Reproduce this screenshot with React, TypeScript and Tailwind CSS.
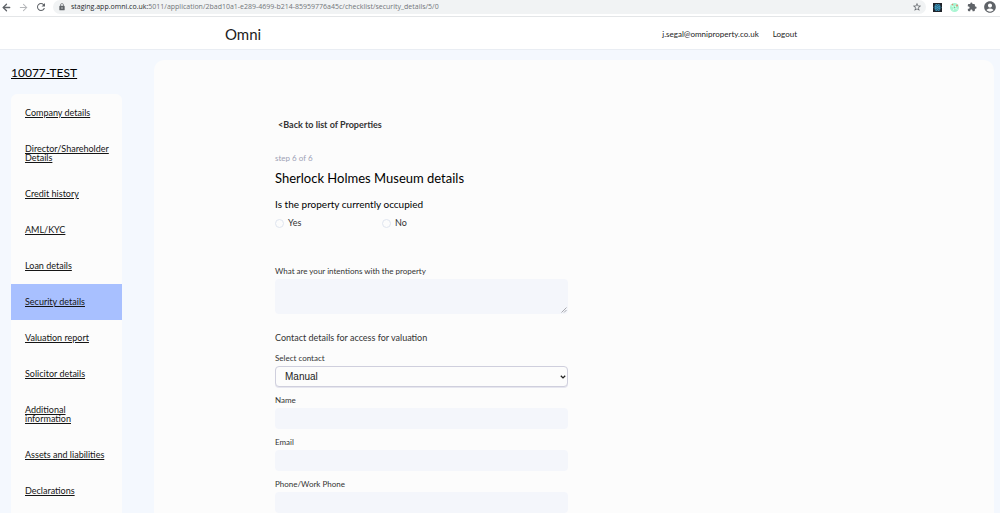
import { ArrowLeft, ArrowRight } from 'lucide-react';
import { MdExtension, MdLock, MdRefresh, MdStarBorder, MdAccountCircle } from 'react-icons/md';

const sections = [
  'Company details',
  'Director/Shareholder Details',
  'Credit history',
  'AML/KYC',
  'Loan details',
  'Security details',
  'Valuation report',
  'Solicitor details',
  'Additional information',
  'Assets and liabilities',
  'Declarations',
];

const contactFields = [
  { id: 'name', label: 'Name', type: 'text' },
  { id: 'email', label: 'Email', type: 'email' },
  { id: 'phone', label: 'Phone/Work Phone', type: 'tel' },
];

function ReactBadge() {
  return (
    <svg viewBox="0 0 18 18" className="size-[9px]" aria-hidden="true">
      <rect width="18" height="18" fill="#20232a" />
      <g fill="none" stroke="#3b9cc4" strokeWidth="1.6">
        <ellipse cx="9" cy="9" rx="7" ry="3" />
        <ellipse cx="9" cy="9" rx="7" ry="3" transform="rotate(60 9 9)" />
        <ellipse cx="9" cy="9" rx="7" ry="3" transform="rotate(120 9 9)" />
      </g>
      <circle cx="9" cy="9" r="2" fill="#3b9cc4" />
    </svg>
  );
}

function NetworkBadge() {
  return (
    <svg viewBox="0 0 18 18" className="size-[9px]" aria-hidden="true">
      <circle cx="9" cy="9" r="9" fill="#a9f5d2" />
      <path d="M3 6l6 3 5-5M9 9l-3 6M9 9l6 4" stroke="#effff7" strokeWidth="1.4" fill="none" />
      <circle cx="5" cy="3" r="1.6" fill="#e8836a" />
      <circle cx="14" cy="5" r="1.8" fill="#e8836a" />
      <circle cx="9" cy="9" r="1.4" fill="#62cf8f" />
    </svg>
  );
}

function BrowserBar() {
  return (
    <div className="flex h-[17px] shrink-0 items-center border-b border-[#e4e6e8] bg-white pb-[2px] text-[#5f6368]">
      <div className="flex w-[53px] shrink-0 items-center gap-[6px] pl-px">
        <button type="button" aria-label="Back"><ArrowLeft className="size-[11px]" strokeWidth={2.8} /></button>
        <button type="button" aria-label="Forward" className="text-[#b5b7ba]"><ArrowRight className="size-[11px]" strokeWidth={2.2} /></button>
        <button type="button" aria-label="Reload"><MdRefresh className="size-3" /></button>
      </div>
      <div className="flex h-[14px] flex-1 items-center rounded-full bg-[#f1f3f4] pr-1 pl-[5px]">
        <MdLock className="size-2 shrink-0" />
        <p className="ml-[5px] flex-1 font-['Open_Sans',sans-serif] text-[7px] leading-[14px] whitespace-nowrap text-[#72767a]">
          <span className="text-[#25282b]">staging.app.omni.co.uk:</span>5011/application/2bad10a1-e289-4699-b214-85959776a45c/checklist/security_details/5/0
        </p>
        <button type="button" aria-label="Bookmark"><MdStarBorder className="size-[10px]" /></button>
      </div>
      <div className="flex shrink-0 items-center gap-2 pr-[3px] pl-[7px]">
        <ReactBadge />
        <NetworkBadge />
        <MdExtension className="size-[10px]" />
        <MdAccountCircle className="-ml-[2px] size-[14px]" />
      </div>
    </div>
  );
}

function SiteHeader() {
  return (
    <header className="flex h-[33px] shrink-0 items-center justify-between border-b border-[#e9edf3] bg-white pt-[2px] pr-[203px] pl-[225px] text-[#1c1c1c]">
      <a href="#home" className="text-[15px] leading-5">Omni</a>
      <nav className="flex gap-[14px] text-[8px] leading-3">
        <a href="#account">j.segal@omniproperty.co.uk</a>
        <a href="#logout">Logout</a>
      </nav>
    </header>
  );
}

function Sidebar() {
  return (
    <aside className="w-[111px] shrink-0 pt-[14px]">
      <a href="#application" className="block text-[12px] leading-[18px] whitespace-nowrap text-black underline">10077-TEST</a>
      <nav className="mt-3 rounded-md bg-[#fcfcfc] pt-px pb-4">
        {sections.map((section) => (
          <a
            key={section}
            href="#section"
            aria-current={section === 'Security details' ? 'page' : undefined}
            className="block pt-[13px] pr-3 pb-[14px] pl-[14px] text-[9px] leading-[9px] text-[#151515] underline aria-[current=page]:bg-[#a8c0ff]"
          >
            {section}
          </a>
        ))}
      </nav>
    </aside>
  );
}

function Choice({ label }: { label: string }) {
  return (
    <label className="flex items-center gap-1 text-[9px] leading-3">
      <input type="radio" name="occupied" className="size-[9px] appearance-none rounded-full border border-[#dfe5ef] bg-[#fcfcfc] checked:bg-[#a8c0ff]" />
      {label}
    </label>
  );
}

function PropertyForm() {
  return (
    <form className="w-[293px] max-w-full pb-6 text-[#333333]">
      <a href="#properties" className="ml-[3px] block text-[9px] leading-3 font-bold">&lt;Back to list of Properties</a>
      <p className="mt-[21px] text-[8px] leading-3 text-[#9da1b5]">step 6 of 6</p>
      <h1 className="mt-[5px] text-[13px] leading-[18px] text-black">Sherlock Holmes Museum details</h1>
      <fieldset>
        <legend className="pt-[11px] text-[10px] leading-3 text-black">Is the property currently occupied</legend>
        <div className="mt-[7px] grid grid-cols-[107px_1fr]">
          <Choice label="Yes" />
          <Choice label="No" />
        </div>
      </fieldset>
      <label htmlFor="intentions" className="mt-9 block text-[8px] leading-3">What are your intentions with the property</label>
      <div className="relative mt-[2px]">
        <textarea id="intentions" className="block h-[35px] w-full resize-none rounded-[4px] bg-[#f4f6fb] p-2 text-[9px]" />
        <svg viewBox="0 0 6 6" className="pointer-events-none absolute right-px bottom-px size-[6px]" aria-hidden="true">
          <path d="M0.5 5.5l5-5M3 5.5l2.5-2.5" stroke="#85878c" strokeWidth="0.7" />
        </svg>
      </div>
      <h2 className="mt-[18px] text-[9px] leading-3">Contact details for access for valuation</h2>
      <label htmlFor="contact" className="mt-2 block text-[8px] leading-3">Select contact</label>
      <div className="relative mt-[2px]">
        <select
          id="contact"
          defaultValue="Manual"
          className="block h-[21px] w-full appearance-none rounded-[4px] border border-[#cfcfdd] bg-[#fcfcfc] pr-4 pl-[9px] font-['Liberation_Sans',sans-serif] text-[10px] text-[#222222] shadow-[0_1px_0_#e6e6ef]"
        >
          <option>Manual</option>
        </select>
        <svg viewBox="0 0 6 4" className="pointer-events-none absolute top-[9px] right-[2px] h-1 w-[6px]" aria-hidden="true">
          <path d="M0.8 0.7L3 2.9L5.2 0.7" fill="none" stroke="#202020" strokeWidth="1.3" />
        </svg>
      </div>
      <div className="mt-[7px] flex flex-col gap-[7px]">
        {contactFields.map((field) => (
          <div key={field.id}>
            <label htmlFor={field.id} className="block text-[8px] leading-3">{field.label}</label>
            <input id={field.id} type={field.type} className="mt-[2px] block h-[21px] w-full rounded-[4px] bg-[#f4f6fb] px-2 text-[9px]" />
          </div>
        ))}
      </div>
    </form>
  );
}

export default function App() {
  return (
    <div className="flex h-screen flex-col overflow-hidden bg-[#f4f8fe] font-['Lato',sans-serif]">
      <BrowserBar />
      <SiteHeader />
      <div className="flex min-h-0 flex-1 items-start gap-8 overflow-y-auto pr-[6px] pl-[11px] [scrollbar-width:none]">
        <Sidebar />
        <main className="mt-[10px] min-h-full flex-1 rounded-[10px] bg-[#fcfcfc] pt-[59px] pl-[121px]">
          <PropertyForm />
        </main>
      </div>
    </div>
  );
}
